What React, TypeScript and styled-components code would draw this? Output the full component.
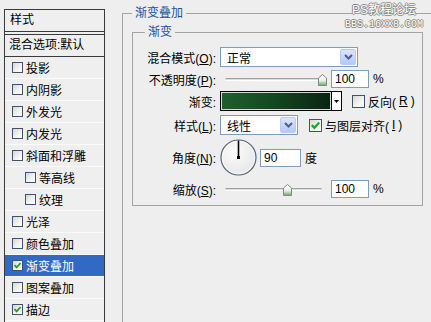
import React from 'react';
import styled, { createGlobalStyle } from 'styled-components';

const GlobalStyle = createGlobalStyle`
  html, body {
    margin: 0;
    padding: 0;
  }
  body {
    width: 431px;
    height: 322px;
    overflow: hidden;
    background: #eeeeee;
    font-family: "Liberation Sans", "Noto Sans CJK SC", sans-serif;
    font-size: 12px;
    color: #000;
  }
`;

const Dialog = styled.div`
  position: relative;
  display: flex;
  align-items: flex-start;
  width: 431px;
  height: 322px;
  overflow: hidden;
`;

/* ---------- left list ---------- */

const StyleList = styled.div`
  flex-shrink: 0;
  box-sizing: border-box;
  width: 101px;
  height: 330px;
  margin: 9px 0 0 4px;
  border: 1px solid #3a3a3a;
  background: #efefef;
`;

const ListHeader = styled.div`
  height: 21px;
  line-height: 21px;
  padding-left: 5px;
  border-bottom: 1px solid #3a3a3a;
`;

const BlendItem = styled.div`
  height: 21px;
  line-height: 21px;
  margin-top: 2px;
  padding-left: 4px;
  border-top: 1px solid #3a3a3a;
  border-bottom: 1px solid #3a3a3a;
`;

const ListItem = styled.div<{ $indent?: boolean; $active?: boolean }>`
  display: flex;
  align-items: center;
  gap: 3px;
  height: 21px;
  padding-left: ${(p) => (p.$indent ? 20 : 7)}px;
  border-bottom: 1px solid #fbfbfb;
  background: ${(p) => (p.$active ? '#316ac5' : 'transparent')};
  color: ${(p) => (p.$active ? '#fff' : '#000')};
`;

const Box = styled.span<{ $size: number }>`
  display: inline-flex;
  align-items: center;
  justify-content: center;
  flex-shrink: 0;
  box-sizing: border-box;
  width: ${(p) => p.$size}px;
  height: ${(p) => p.$size}px;
  border: 1px solid #3d5370;
  background: linear-gradient(135deg, #d8d8d2 0%, #f2f2ee 55%, #ffffff 100%);
`;

const CheckBox = ({ checked, size = 11 }: { checked?: boolean; size?: number }) => (
  <Box $size={size}>
    {checked && (
      <svg width={size - 2} height={size - 2} viewBox="0 0 9 9">
        <path d="M1.5 4.2 L3.6 6.4 L7.6 2" fill="none" stroke="#21a121" strokeWidth="1.8" />
      </svg>
    )}
  </Box>
);

const styleItems = [
  { label: '投影' },
  { label: '内阴影' },
  { label: '外发光' },
  { label: '内发光' },
  { label: '斜面和浮雕' },
  { label: '等高线', indent: true },
  { label: '纹理', indent: true },
  { label: '光泽' },
  { label: '颜色叠加' },
  { label: '渐变叠加', checked: true, active: true },
  { label: '图案叠加' },
  { label: '描边', checked: true },
];

/* ---------- right groups ---------- */

const OuterGroup = styled.fieldset`
  flex-shrink: 0;
  box-sizing: border-box;
  width: 312px;
  height: 400px;
  min-width: 0;
  margin: 5px 0 0 17px;
  padding: 3px 10px 0 9px;
  border: 1px solid #a4a4a4;
`;

const InnerGroup = styled.fieldset`
  box-sizing: border-box;
  width: 291px;
  min-width: 0;
  margin: 0;
  padding: 7px 0 6px 0;
  border: 1px solid #a4a4a4;
`;

const GroupTitle = styled.legend<{ $offset: number }>`
  margin-left: ${(p) => p.$offset}px;
  padding: 0 3px;
  line-height: 16px;
  color: #1d50a3;
`;

const Row = styled.div<{ $h: number; $mt: number }>`
  display: flex;
  align-items: center;
  height: ${(p) => p.$h}px;
  margin-top: ${(p) => p.$mt}px;
`;

const Label = styled.div`
  flex-shrink: 0;
  width: 83px;
  margin-right: 4px;
  text-align: right;
  white-space: nowrap;
`;

const Select = styled.div<{ $w: number }>`
  display: flex;
  align-items: center;
  box-sizing: border-box;
  width: ${(p) => p.$w}px;
  height: 20px;
  padding-left: 6px;
  border: 1px solid #7f9db9;
  background: #fff;
`;

const DropButton = styled.span`
  display: flex;
  align-items: center;
  justify-content: center;
  box-sizing: border-box;
  width: 16px;
  height: 16px;
  margin: 0 1px 0 auto;
  border: 1px solid #b9cbf3;
  border-radius: 2px;
  background: linear-gradient(180deg, #dbe5fd 0%, #c3d4fa 60%, #b5c9f7 100%);
`;

const Chevron = () => (
  <svg width="9" height="6" viewBox="0 0 9 6">
    <path d="M1 1 L4.5 4.5 L8 1" fill="none" stroke="#4d6185" strokeWidth="2" />
  </svg>
);

const Field = styled.div<{ $w: number }>`
  box-sizing: border-box;
  width: ${(p) => p.$w}px;
  height: 18px;
  padding-left: 3px;
  line-height: 16px;
  border: 1px solid #7f9db9;
  background: #fff;
`;

const Unit = styled.span<{ $gap: number }>`
  margin-left: ${(p) => p.$gap}px;
`;

const Slider = styled.div`
  position: relative;
  display: flex;
  align-items: center;
  box-sizing: border-box;
  width: 111px;
  height: 20px;
  padding: 0 9px 0 5px;
`;

const Track = styled.div`
  flex: 1;
  box-sizing: border-box;
  height: 3px;
  border-top: 1px solid #a0a0a0;
  border-bottom: 1px solid #ffffff;
  border-radius: 2px;
  background: #dcdcdc;
`;

const Thumb = styled.svg`
  position: absolute;
  top: 5px;
`;

const SliderControl = ({ value }: { value: number }) => (
  <Slider>
    <Track />
    <Thumb width="9" height="12" viewBox="0 0 9 12" style={{ left: 5 + value * 97 - 4.5 }}>
      <defs>
        <linearGradient id="thumbFill" x1="0" y1="0" x2="0" y2="1">
          <stop offset="0" stopColor="#ffffff" />
          <stop offset="0.55" stopColor="#e8f0e6" />
          <stop offset="1" stopColor="#6aa86a" />
        </linearGradient>
      </defs>
      <path d="M0.5 4 L4.5 0.5 L8.5 4 V11.5 H0.5 Z" fill="url(#thumbFill)" stroke="#7d8c7d" />
    </Thumb>
  </Slider>
);

const GradientPicker = styled.div`
  display: flex;
  height: 20px;
`;

const GradientSwatch = styled.div`
  box-sizing: border-box;
  width: 112px;
  height: 20px;
  border: 1px solid #000;
  box-shadow: inset 0 0 0 1px #d8d8d8;
  background: linear-gradient(90deg, #1f5f2b 0%, #154a20 45%, #082412 100%);
`;

const GradientArrow = styled.div`
  display: flex;
  align-items: center;
  justify-content: center;
  box-sizing: border-box;
  width: 10px;
  height: 20px;
  border: 1px solid #000;
  border-left: none;
  background: #fff;
`;

const CheckOption = styled.label<{ $gap: number }>`
  display: flex;
  align-items: center;
  gap: 3px;
  margin-left: ${(p) => p.$gap}px;
  white-space: nowrap;
`;

const AngleDial = () => (
  <svg width="37" height="37" viewBox="0 0 37 37">
    <defs>
      <radialGradient id="dialFill" cx="0.4" cy="0.35" r="0.7">
        <stop offset="0" stopColor="#fbfbfb" />
        <stop offset="1" stopColor="#e6e6e6" />
      </radialGradient>
    </defs>
    <circle cx="18.5" cy="18.5" r="17.5" fill="url(#dialFill)" stroke="#566473" strokeWidth="1.2" />
    <circle cx="18.5" cy="18.5" r="16.2" fill="none" stroke="#ffffff" strokeWidth="0.8" opacity="0.8" />
    <line x1="18.5" y1="18.5" x2="18.5" y2="1.5" stroke="#000" strokeWidth="1.6" />
    <rect x="17" y="17" width="3" height="3" fill="#000" />
  </svg>
);

const Watermark = styled.div`
  position: absolute;
  top: 3px;
  right: 6px;
  width: 82px;
  text-align: center;
  color: #fff;
  text-shadow: 1px 0 0 #8a8a8a, -1px 0 0 #8a8a8a, 0 1px 0 #8a8a8a, 0 -1px 0 #8a8a8a;
`;

const MarkTitle = styled.div`
  font-size: 12px;
  line-height: 15px;
`;

const MarkUrl = styled.div`
  font-family: "Liberation Mono", monospace;
  font-size: 10px;
  line-height: 13px;
`;

export default function App() {
  return (
    <Dialog>
      <GlobalStyle />
      <StyleList>
        <ListHeader>样式</ListHeader>
        <BlendItem>混合选项:默认</BlendItem>
        {styleItems.map((item) => (
          <ListItem key={item.label} $indent={item.indent} $active={item.active}>
            <CheckBox checked={item.checked} />
            <span>{item.label}</span>
          </ListItem>
        ))}
      </StyleList>

      <OuterGroup>
        <GroupTitle $offset={0}>渐变叠加</GroupTitle>
        <InnerGroup>
          <GroupTitle $offset={12}>渐变</GroupTitle>

          <Row $h={20} $mt={0}>
            <Label>
              混合模式(<u>O</u>):
            </Label>
            <Select $w={138}>
              正常
              <DropButton>
                <Chevron />
              </DropButton>
            </Select>
          </Row>

          <Row $h={20} $mt={2}>
            <Label>
              不透明度(<u>P</u>):
            </Label>
            <SliderControl value={1} />
            <Field $w={38}>100</Field>
            <Unit $gap={4}>%</Unit>
          </Row>

          <Row $h={20} $mt={2}>
            <Label>渐变:</Label>
            <GradientPicker>
              <GradientSwatch />
              <GradientArrow>
                <svg width="5" height="3" viewBox="0 0 5 3">
                  <path d="M0 0 H5 L2.5 3 Z" fill="#000" />
                </svg>
              </GradientArrow>
            </GradientPicker>
            <CheckOption $gap={10}>
              <CheckBox size={13} />
              反向(<u>R</u>)
            </CheckOption>
          </Row>

          <Row $h={20} $mt={4}>
            <Label>
              样式(<u>L</u>):
            </Label>
            <Select $w={78}>
              线性
              <DropButton>
                <Chevron />
              </DropButton>
            </Select>
            <CheckOption $gap={11}>
              <CheckBox size={13} checked />
              与图层对齐(<u>I</u>)
            </CheckOption>
          </Row>

          <Row $h={37} $mt={4}>
            <Label>
              角度(<u>N</u>):
            </Label>
            <AngleDial />
            <Field $w={41} style={{ marginLeft: 3 }}>
              90
            </Field>
            <Unit $gap={4}>度</Unit>
          </Row>

          <Row $h={20} $mt={3}>
            <Label>
              缩放(<u>S</u>):
            </Label>
            <SliderControl value={0.64} />
            <Field $w={38}>100</Field>
            <Unit $gap={4}>%</Unit>
          </Row>
        </InnerGroup>
      </OuterGroup>

      <Watermark>
        <MarkTitle>PS教程论坛</MarkTitle>
        <MarkUrl>BBS.16XX8.COM</MarkUrl>
      </Watermark>
    </Dialog>
  );
}
